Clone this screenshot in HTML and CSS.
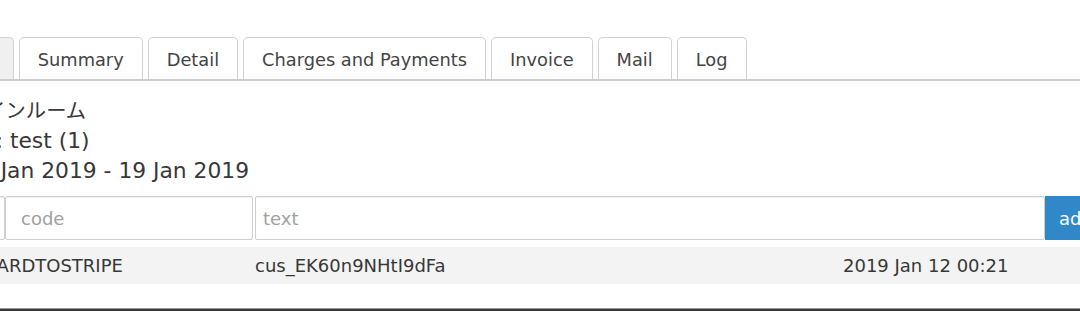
FILE: index.html
```
<!DOCTYPE html>
<html lang="en">

<head>
    <meta charset="UTF-8" />
    <meta name="viewport" content="width=device-width, initial-scale=1.0" />
    <title>Booking</title>
    <link rel="stylesheet" href="styles.css">
</head>

<body>

    <div class="page">
        <ul class="tabs">
            <li class="tab current">Booking</li>
            <li class="tab">Summary</li>
            <li class="tab">Detail</li>
            <li class="tab">Charges and Payments</li>
            <li class="tab">Invoice</li>
            <li class="tab">Mail</li>
            <li class="tab">Log</li>
        </ul>

        <div class="info">
            <div class="room">ツインルーム</div>
            <div>No: test (1)</div>
            <div>12 Jan 2019 - 19 Jan 2019</div>
        </div>

        <div class="log-form">
            <input type="text" class="field type" />
            <input type="text" class="field code" placeholder="code" />
            <input type="text" class="field text" placeholder="text" />
            <button class="add-btn">add</button>
        </div>

        <div class="log-row">
            <div class="cell">ADDCARDTOSTRIPE</div>
            <div class="cell">cus_EK60n9NHtI9dFa</div>
            <div class="cell">2019 Jan 12 00:21</div>
        </div>

        <div class="frame"></div>
    </div>

</body>

</html>
```

FILE: styles.css
```
* {
    box-sizing: border-box;
    font-family: 'DejaVu Sans', Verdana, 'Noto Sans CJK JP', sans-serif;
}

body {
    margin: 0;
    background-color: white;
    color: #383838;
    overflow: hidden;
    height: 332px;
}

.page {
    margin-left: -64px;
    width: 1250px;
}

.tabs {
    list-style: none;
    margin: 37px 0 0 -32px;
    padding: 0;
    display: flex;
    gap: 5px;
    border-bottom: 2px solid #cdcdcd;
}

.tab {
    height: 42px;
    padding: 3px 18px 0;
    line-height: 38px;
    font-size: 17.8px;
    color: #444;
    background-color: white;
    border: 1px solid #d2d2d2;
    border-bottom: none;
    border-radius: 5px 5px 0 0;
}

.tab.current {
    background-color: #f0f0f0;
}

.info {
    padding: 15px 0 0 30px;
    font-size: 21.8px;
    line-height: 30px;
}

.info .room {
    margin-left: -1px;
    font-size: 20.3px;
}

.log-form {
    display: flex;
    margin-top: 10px;
    height: 44px;
}

.field {
    height: 44px;
    border: 1px solid #cfcfcf;
    border-radius: 2px;
    box-shadow: inset 0 1px 1px rgba(0, 0, 0, 0.06);
    font-size: 18px;
    color: #333;
    outline: none;
}

.field::placeholder {
    color: #a0a0a0;
}

.field.type {
    width: 69px;
}

.field.code {
    width: 248px;
    padding-left: 15px;
    margin-right: 2px;
}

.field.text {
    width: 790px;
    padding-left: 7px;
}

.add-btn {
    height: 44px;
    padding: 0 14px;
    border: none;
    background-color: #3088c9;
    color: white;
    font-size: 18px;
}

.log-row {
    display: grid;
    grid-template-columns: 311px 588px 1fr;
    margin-top: 7px;
    background-color: #f3f3f3;
    font-size: 18px;
    line-height: 37px;
}

.cell {
    padding: 0 8px;
    white-space: nowrap;
}

.frame {
    margin-top: 24px;
    border-top: 1px solid #999;
    border-bottom: 2px solid #3a3a3a;
}
```
